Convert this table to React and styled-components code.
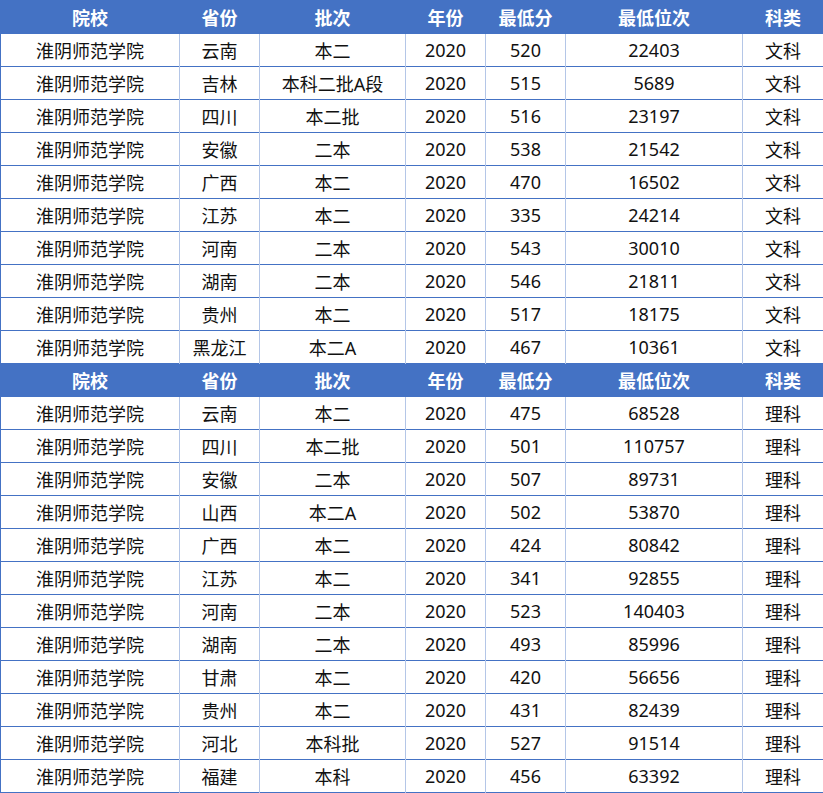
import React from "react";
import styled, { createGlobalStyle } from "styled-components";

const GlobalStyle = createGlobalStyle`
    body {
        margin: 0;
        background: #fff;
        font-family: "Noto Sans", "Noto Sans CJK SC", sans-serif;
    }
`;

const headers = ["院校", "省份", "批次", "年份", "最低分", "最低位次", "科类"];
const widths = [179, 80, 146, 80, 80, 177, 81];

const wenke = [
    ["云南", "本二", "520", "22403"],
    ["吉林", "本科二批A段", "515", "5689"],
    ["四川", "本二批", "516", "23197"],
    ["安徽", "二本", "538", "21542"],
    ["广西", "本二", "470", "16502"],
    ["江苏", "本二", "335", "24214"],
    ["河南", "二本", "543", "30010"],
    ["湖南", "二本", "546", "21811"],
    ["贵州", "本二", "517", "18175"],
    ["黑龙江", "本二A", "467", "10361"]
];

const like = [
    ["云南", "本二", "475", "68528"],
    ["四川", "本二批", "501", "110757"],
    ["安徽", "二本", "507", "89731"],
    ["山西", "本二A", "502", "53870"],
    ["广西", "本二", "424", "80842"],
    ["江苏", "本二", "341", "92855"],
    ["河南", "二本", "523", "140403"],
    ["湖南", "二本", "493", "85996"],
    ["甘肃", "本二", "420", "56656"],
    ["贵州", "本二", "431", "82439"],
    ["河北", "本科批", "527", "91514"],
    ["福建", "本科", "456", "63392"]
];

function Section({ rows, kind }) {
    return (
        <>
            <HeadRow>
                {headers.map(h => (
                    <HeadCell key={h}>{h}</HeadCell>
                ))}
            </HeadRow>
            {rows.map((r, idx) => (
                <Row key={kind + idx}>
                    <Cell>淮阴师范学院</Cell>
                    <Cell>{r[0]}</Cell>
                    <Cell>{r[1]}</Cell>
                    <Cell>2020</Cell>
                    <Cell>{r[2]}</Cell>
                    <Cell>{r[3]}</Cell>
                    <Cell>{kind}</Cell>
                </Row>
            ))}
        </>
    );
}

function App() {
    return (
        <>
            <GlobalStyle />
            <Table>
                <colgroup>
                    {widths.map((w, i) => (
                        <col key={i} style={{ width: w }} />
                    ))}
                </colgroup>
                <tbody>
                    <Section rows={wenke} kind="文科" />
                    <Section rows={like} kind="理科" />
                </tbody>
            </Table>
        </>
    );
}

const Table = styled.table`
    width: 823px;
    table-layout: fixed;
    border-collapse: collapse;
    border: 1px solid #4472c4;
    border-top: none;
`;

const Row = styled.tr`
    height: 33px;
    border-top: 1px solid #4472c4;
`;

const HeadRow = styled(Row)`
    background: #4472c4;
`;

const Cell = styled.td`
    padding: 0;
    height: 32px;
    text-align: center;
    vertical-align: middle;
    font-size: 18px;
    color: #111;
    border-left: 1px solid #b4c6e7;
    border-top: 1px solid #4472c4;
    white-space: nowrap;
    &:first-child {
        border-left: 1px solid #4472c4;
    }
`;

const HeadCell = styled(Cell)`
    color: #fff;
    font-weight: 700;
    border-left: 1px solid #4472c4;
`;

export default App;
